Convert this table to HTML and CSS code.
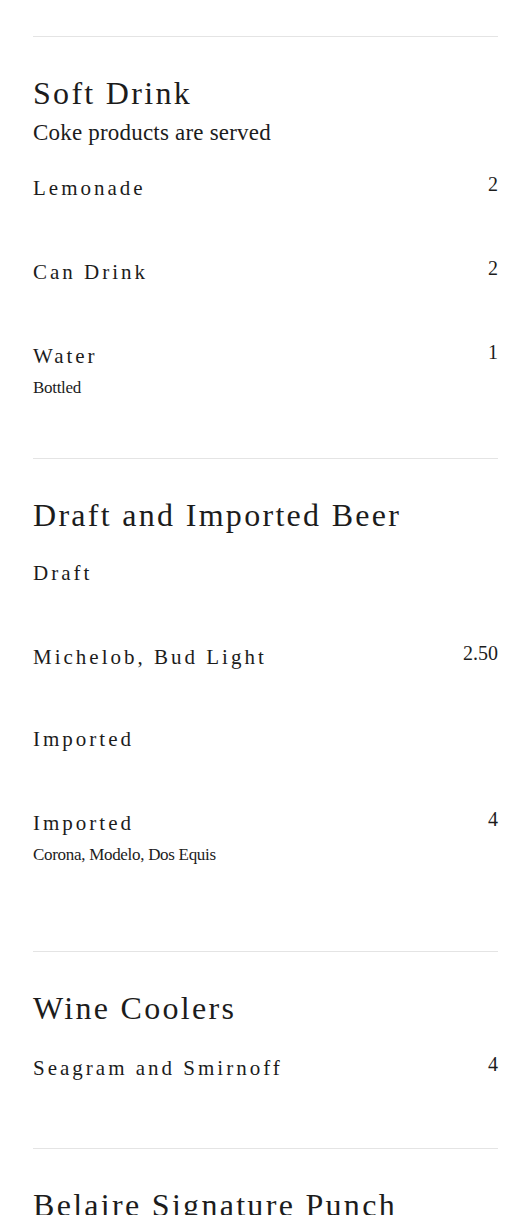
FILE: index.html
```html
<!DOCTYPE html>
<html lang="en">
<head>
<meta charset="utf-8">
<title>Menu</title>
<link rel="stylesheet" href="styles.css">
</head>
<body>
<main class="menu">
  <section class="section section--soft">
    <header class="section-head">
      <h2 class="section-title">Soft Drink</h2>
      <p class="section-desc">Coke products are served</p>
    </header>
    <div class="items">
      <div class="item">
        <div class="item-main"><h3 class="item-name">Lemonade</h3></div>
        <span class="item-price">2</span>
      </div>
      <div class="item">
        <div class="item-main"><h3 class="item-name">Can Drink</h3></div>
        <span class="item-price">2</span>
      </div>
      <div class="item">
        <div class="item-main">
          <h3 class="item-name">Water</h3>
          <p class="item-desc">Bottled</p>
        </div>
        <span class="item-price">1</span>
      </div>
    </div>
  </section>

  <section class="section section--beer">
    <header class="section-head">
      <h2 class="section-title">Draft and Imported Beer</h2>
    </header>
    <div class="items">
      <h4 class="group-title">Draft</h4>
      <div class="item">
        <div class="item-main"><h3 class="item-name">Michelob, Bud Light</h3></div>
        <span class="item-price">2.50</span>
      </div>
      <h4 class="group-title">Imported</h4>
      <div class="item">
        <div class="item-main">
          <h3 class="item-name">Imported</h3>
          <p class="item-desc">Corona, Modelo, Dos Equis</p>
        </div>
        <span class="item-price">4</span>
      </div>
    </div>
  </section>

  <section class="section section--wine">
    <header class="section-head">
      <h2 class="section-title">Wine Coolers</h2>
    </header>
    <div class="items">
      <div class="item">
        <div class="item-main"><h3 class="item-name">Seagram and Smirnoff</h3></div>
        <span class="item-price">4</span>
      </div>
    </div>
  </section>

  <section class="section">
    <header class="section-head">
      <h2 class="section-title">Belaire Signature Punch</h2>
    </header>
  </section>
</main>
</body>
</html>
```

FILE: styles.css
```css
* {
  box-sizing: border-box;
}

html, body {
  margin: 0;
  padding: 0;
  background: #ffffff;
}

body {
  font-family: "Liberation Serif", "Times New Roman", serif;
  color: #1c1c1c;
  overflow: hidden;
}

.menu {
  padding: 36px 32px 0 33px;
}

.section {
  border-top: 1px solid #e4e4e4;
  padding-top: 36px;
  padding-bottom: 58px;
}

.section--beer {
  padding-bottom: 84px;
}

.section--wine {
  padding-bottom: 65px;
}

.section-head {
  margin-bottom: 25px;
}

.section-title {
  margin: 0;
  font-size: 32px;
  line-height: 40px;
  font-weight: normal;
  letter-spacing: 2.3px;
}

.section-desc {
  margin: 5px 0 0;
  font-size: 23px;
  line-height: 30px;
  letter-spacing: 0.2px;
}

.items {
  display: flex;
  flex-direction: column;
}

.group-title {
  margin: 0 0 56px;
  font-size: 21px;
  line-height: 26px;
  font-weight: normal;
  letter-spacing: 3px;
}

.item {
  display: flex;
  justify-content: space-between;
  align-items: flex-start;
  gap: 16px;
  margin-bottom: 54px;
}

.item:last-child {
  margin-bottom: 0;
}

.item-main {
  display: flex;
  flex-direction: column;
}

.item-name {
  margin: 0;
  font-size: 21px;
  line-height: 30px;
  font-weight: normal;
  letter-spacing: 3px;
}

.item-desc {
  margin: 5px 0 0;
  font-size: 17px;
  line-height: 24px;
  letter-spacing: -0.3px;
}

.item-price {
  font-size: 20px;
  line-height: 22px;
  text-align: right;
  white-space: nowrap;
}
```
